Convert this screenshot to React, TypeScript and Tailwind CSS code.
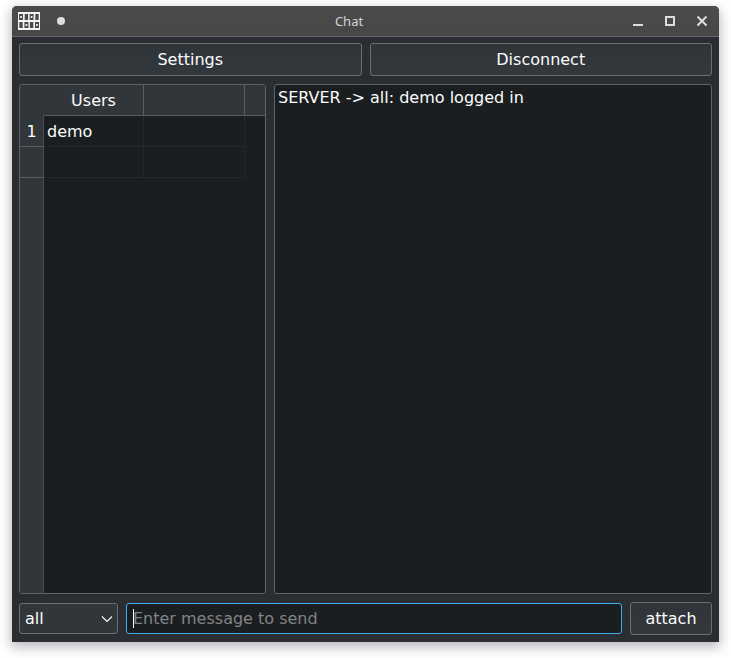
import React from "react";

const buttonClass =
  "h-[33px] rounded-[3px] border border-[#6b6f73] bg-linear-to-b from-[#2f3438] to-[#33383c] text-center";

function AppIcon() {
  const columns = [1, 6.4, 11.6, 17];
  return (
    <svg width="22" height="18" viewBox="0 0 22 18" aria-hidden="true">
      <rect width="22" height="18" fill="#f4f4f4" />
      {columns.map((x, i) => {
        const hollowTop = i % 2 === 0;
        return (
          <g key={x} fill="#4a4a4a">
            <rect x={hollowTop ? x : x + 0.3} y="2" width={hollowTop ? 4 : 3.4} height="6" />
            <rect x={hollowTop ? x + 0.3 : x} y="10" width={hollowTop ? 3.4 : 4} height="6" />
            <rect x={x + 1.1} y={hollowTop ? 4 : 12} width="1.8" height="2" fill="#e8e8e8" />
          </g>
        );
      })}
    </svg>
  );
}

function TitleBar() {
  return (
    <header className="flex h-[31px] items-center rounded-t-[5px] border-b border-[#686868] bg-linear-to-b from-[#4b4b4b] to-[#474747] text-[#dedede]">
      <div className="flex w-14 items-center gap-[17px] pl-[6px]">
        <AppIcon />
        <button type="button" aria-label="Pin window" className="size-2 rounded-full bg-[#dedede]" />
      </div>
      <h1 className="flex-1 text-center font-['Noto_Sans',sans-serif] text-[13px] leading-5 text-[#d3d3d3]">
        Chat
      </h1>
      <div className="flex items-center gap-4 pr-[9px]">
        <button type="button" aria-label="Minimize" className="size-4">
          <svg width="16" height="16" viewBox="0 0 16 16" shapeRendering="crispEdges">
            <rect x="3" y="11" width="10" height="2" fill="#dedede" />
          </svg>
        </button>
        <button type="button" aria-label="Maximize" className="size-4">
          <svg width="16" height="16" viewBox="0 0 16 16" shapeRendering="crispEdges">
            <rect x="4" y="4" width="8" height="8" fill="none" stroke="#dedede" strokeWidth="2" />
          </svg>
        </button>
        <button type="button" aria-label="Close" className="size-4">
          <svg width="16" height="16" viewBox="0 0 16 16">
            <path d="M3.5 3.5l9 9M12.5 3.5l-9 9" stroke="#dedede" strokeWidth="2" />
          </svg>
        </button>
      </div>
    </header>
  );
}

const headCell = "border-b border-r border-b-[#5a5e61] border-r-[#5a5e61] bg-[#31363a] p-0 pt-[2px] font-normal";
const rowCell = "border-r border-r-[#4a4e52] bg-[#31363a] p-0 font-normal";
const bodyCell = "border-b border-r border-[#26292c] p-0 pt-[2px] pl-[3px]";

function UsersTable() {
  return (
    <section className="w-[247px] shrink-0 overflow-hidden rounded-[3px] border border-[#5f6366] bg-[#1b1e20]">
      <table className="h-full w-full table-fixed border-separate border-spacing-0">
        <colgroup>
          <col className="w-6" />
          <col className="w-[100px]" />
          <col className="w-[101px]" />
          <col />
        </colgroup>
        <thead>
          <tr className="h-[31px]">
            <td className="bg-[#31363a] p-0" />
            <th scope="col" className={headCell}>Users</th>
            <td className={headCell} />
            <td className="border-b border-[#5a5e61] bg-[#31363a] p-0" />
          </tr>
        </thead>
        <tbody>
          <tr className="h-[31px]">
            <th scope="row" className={rowCell + " border-b border-b-[#5a5e61] pt-[2px]"}>1</th>
            <td className={bodyCell}>demo</td>
            <td className={bodyCell} />
            <td className="p-0" />
          </tr>
          <tr className="h-[31px]">
            <td className={rowCell + " border-b border-b-[#5a5e61]"} />
            <td className={bodyCell} />
            <td className={bodyCell} />
            <td className="p-0" />
          </tr>
          <tr>
            <td className={rowCell} />
            <td colSpan={3} className="p-0" />
          </tr>
        </tbody>
      </table>
    </section>
  );
}

export default function App() {
  return (
    <div className="flex h-screen flex-col bg-white px-3 pt-[6px] pb-4 font-['DejaVu_Sans',sans-serif] text-base leading-5 text-[#fcfcfc]">
      <div className="flex flex-1 flex-col rounded-t-[5px] bg-[#2a2e32] shadow-[0_4px_12px_1px_rgba(40,30,40,0.32)]">
        <TitleBar />
        <main className="flex flex-1 flex-col gap-2 px-[7px] pt-[6px] pb-[7px]">
          <div className="grid grid-cols-2 gap-2">
            <button type="button" className={buttonClass}>Settings</button>
            <button type="button" className={buttonClass}>Disconnect</button>
          </div>
          <div className="flex flex-1 gap-2">
            <UsersTable />
            <section
              aria-label="Messages"
              className="flex-1 rounded-[3px] border border-[#5f6366] bg-[#1b1e20] p-[3px]"
            >
              <p>SERVER -&gt; all: demo logged in</p>
            </section>
          </div>
          <form className="flex items-center gap-2" onSubmit={(e) => e.preventDefault()}>
            <div className="relative">
              <select
                aria-label="Recipient"
                className="h-[31px] w-[99px] appearance-none rounded-[3px] border border-[#6b6f73] bg-[#31363a] pl-[5px]"
              >
                <option>all</option>
              </select>
              <svg
                className="pointer-events-none absolute top-3 right-[5px]"
                width="12"
                height="8"
                viewBox="0 0 12 8"
                fill="none"
                aria-hidden="true"
              >
                <path d="M1 1.5l5 5 5-5" stroke="#fcfcfc" strokeWidth="1.1" />
              </svg>
            </div>
            <div className="relative flex-1">
              <input
                type="text"
                aria-label="Message"
                placeholder="Enter message to send"
                className="h-[31px] w-full rounded-[3px] border border-[#3daee9] bg-[#1b1e20] px-[6px] caret-[#fcfcfc] outline-none placeholder:text-[#818385]"
              />
              <span className="pointer-events-none absolute top-[6px] left-[7px] h-[19px] w-px bg-[#fcfcfc]" />
            </div>
            <button type="submit" className={buttonClass + " w-[82px]"}>attach</button>
          </form>
        </main>
      </div>
    </div>
  );
}
